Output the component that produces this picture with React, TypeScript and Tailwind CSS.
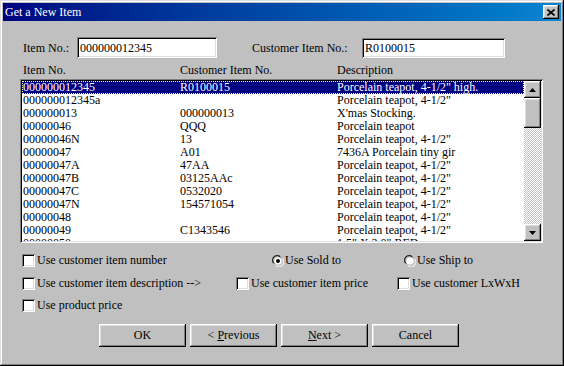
import type { ReactNode } from 'react'

const raised =
  'shadow-[inset_-1px_-1px_#000,inset_1px_1px_#fff,inset_-2px_-2px_#808080,inset_2px_2px_#dfdfdf]'
const sunken =
  'shadow-[inset_1px_1px_#808080,inset_-1px_-1px_#fff,inset_2px_2px_#000,inset_-2px_-2px_#dfdfdf]'

const rows: [string, string, string][] = [
  ['000000012345', 'R0100015', 'Porcelain teapot, 4-1/2" high.'],
  ['000000012345a', '', 'Porcelain teapot, 4-1/2"'],
  ['000000013', '000000013', "X'mas Stocking."],
  ['00000046', 'QQQ', 'Porcelain teapot'],
  ['00000046N', '13', 'Porcelain teapot, 4-1/2"'],
  ['00000047', 'A01', '7436A Porcelain tiny gir'],
  ['00000047A', '47AA', 'Porcelain teapot, 4-1/2"'],
  ['00000047B', '03125AAc', 'Porcelain teapot, 4-1/2"'],
  ['00000047C', '0532020', 'Porcelain teapot, 4-1/2"'],
  ['00000047N', '154571054', 'Porcelain teapot, 4-1/2"'],
  ['00000048', '', 'Porcelain teapot, 4-1/2"'],
  ['00000049', 'C1343546', 'Porcelain teapot, 4-1/2"'],
  ['00000050', '', '1.5" X 2.0" RED'],
]

function Checkbox({ label, width }: { label: string; width?: string }) {
  return (
    <div className={`flex h-[13px] items-center gap-[2px] ${width ?? ''}`}>
      <span className={`h-[13px] w-[13px] shrink-0 bg-white ${sunken}`} />
      <span className="whitespace-nowrap leading-[13px]">{label}</span>
    </div>
  )
}

function Radio({ label, checked, width }: { label: string; checked?: boolean; width?: string }) {
  return (
    <div className={`flex h-[13px] items-center gap-[1px] ${width ?? ''}`}>
      <svg width="12" height="12" viewBox="0 0 12 12" className="shrink-0">
        <path d="M1 8A5 5 0 0 1 8 1" stroke="#808080" fill="none" />
        <path d="M2 8.5A4 4 0 0 1 8.5 2" stroke="#000" fill="none" />
        <circle cx="6" cy="6" r="3.6" fill="#fff" />
        <path d="M4 11A5 5 0 0 0 11 4" stroke="#fff" fill="none" />
        <path d="M3.5 10A4 4 0 0 0 10 3.5" stroke="#dfdfdf" fill="none" />
        {checked && <circle cx="6" cy="6" r="2" fill="#000" />}
      </svg>
      <span className="whitespace-nowrap leading-[13px]">{label}</span>
    </div>
  )
}

function Button({ children }: { children: ReactNode }) {
  return (
    <button className={`flex h-[23px] w-[87px] items-center justify-center whitespace-pre bg-[#c0c0c0] leading-[13px] ${raised}`}>
      {children}
    </button>
  )
}

function Arrow({ up }: { up?: boolean }) {
  return (
    <div className={`flex h-[17px] w-[17px] items-center justify-center bg-[#c0c0c0] ${raised}`}>
      <svg width="7" height="4" viewBox="0 0 7 4">
        <path d={up ? 'M3.5 0L7 4H0Z' : 'M0 0H7L3.5 4Z'} fill="#000" />
      </svg>
    </div>
  )
}

export default function App() {
  return (
    <div
      className="flex h-[366px] w-[564px] flex-col bg-[#c0c0c0] p-[3px] text-[12px] text-black shadow-[inset_-1px_-1px_#000,inset_1px_1px_#dfdfdf,inset_-2px_-2px_#808080,inset_2px_2px_#fff]"
      style={{ fontFamily: '"Liberation Serif", "Noto Sans CJK TC", serif' }}
    >
      <div className="flex h-[18px] items-center justify-between bg-gradient-to-r from-[#000080] to-[#1084d0] pl-[2px] pr-[2px] text-white">
        <span className="leading-[13px]">Get a New Item</span>
        <div className={`flex h-[14px] w-[16px] items-center justify-center bg-[#c0c0c0] ${raised}`}>
          <svg width="8" height="7" viewBox="0 0 8 7">
            <path d="M0.5 0.5L7.5 6.5M7.5 0.5L0.5 6.5" stroke="#000" strokeWidth="1.6" />
          </svg>
        </div>
      </div>

      <div className="flex flex-1 flex-col px-[17px]">
        <div className="mt-[16px] flex h-[21px] items-center">
          <span className="ml-[3px] w-[54px] whitespace-nowrap">Item No.:</span>
          <div className={`flex h-[21px] w-[140px] items-center bg-white pl-[3px] ${sunken}`}>000000012345</div>
          <span className="ml-[35px] w-[110px] whitespace-nowrap">Customer Item No.:</span>
          <div className={`flex h-[20px] w-[143px] items-center bg-white pl-[3px] ${sunken}`}>R0100015</div>
        </div>

        <div className="mt-[6px] flex h-[13px] items-center pl-[3px] leading-[13px]">
          <span className="w-[157px]">Item No.</span>
          <span className="w-[157px]">Customer Item No.</span>
          <span>Description</span>
        </div>

        <div className={`mt-[2px] flex h-[164px] w-[523px] bg-white p-[2px] ${sunken}`}>
          <div className="flex-1 overflow-hidden">
            {rows.map(([no, cust, desc], i) => (
              <div
                key={no}
                className={`flex h-[13px] items-center whitespace-nowrap pl-[1px] leading-[13px] ${
                  i === 0 ? 'bg-[#000080] text-white outline-1 -outline-offset-1 outline-dotted outline-[#ffff80]' : ''
                }`}
              >
                <span className="w-[157px]">{no}</span>
                <span className="w-[157px]">{cust}</span>
                <span>{desc}</span>
              </div>
            ))}
          </div>
          <div className="flex w-[17px] flex-col">
            <Arrow up />
            <div className={`h-[30px] bg-[#c0c0c0] ${raised}`} />
            <div className="flex-1 bg-[repeating-conic-gradient(#c0c0c0_0_25%,#fff_0_50%)] bg-[length:2px_2px]" />
            <Arrow />
          </div>
        </div>

        <div className="ml-[2px] mt-[11px] flex items-center">
          <Checkbox label="Use customer item number" width="w-[250px]" />
          <Radio label="Use Sold to" checked width="w-[132px]" />
          <Radio label="Use Ship to" />
        </div>
        <div className="ml-[2px] mt-[10px] flex items-center">
          <Checkbox label="Use customer item description -->" width="w-[214px]" />
          <Checkbox label="Use customer item price" width="w-[161px]" />
          <Checkbox label="Use customer LxWxH" />
        </div>
        <div className="ml-[2px] mt-[9px] flex items-center">
          <Checkbox label="Use product price" />
        </div>

        <div className="ml-[79px] mt-[12px] flex gap-[4px]">
          <Button>OK</Button>
          <Button>
            {'< '}
            <span className="underline">P</span>
            {'revious'}
          </Button>
          <Button>
            <span className="underline">N</span>
            {'ext >'}
          </Button>
          <Button>Cancel</Button>
        </div>
      </div>
    </div>
  )
}
